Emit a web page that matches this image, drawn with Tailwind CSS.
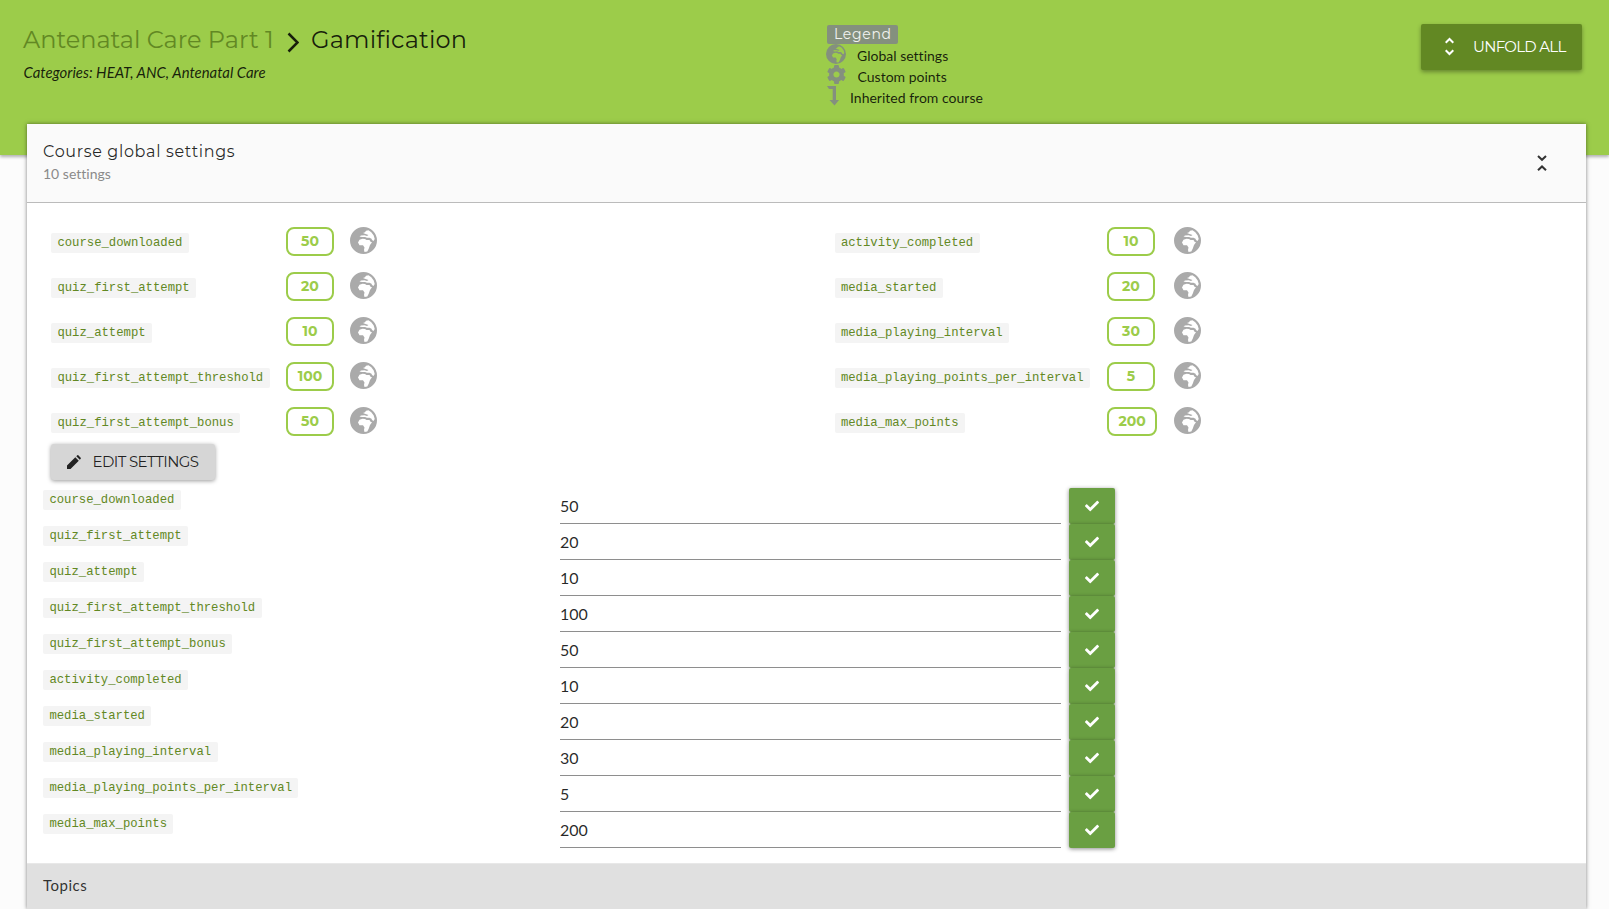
<!DOCTYPE html>
<html lang="en">
<head>
<meta charset="utf-8">
<title>Gamification</title>
<script src="https://cdn.jsdelivr.net/npm/@tailwindcss/browser@4"></script>
</head>
<body class="h-[909px] overflow-hidden bg-[#fcfcfc] font-[Lato,sans-serif] text-sm text-black/85">
<svg class="hidden">
  <symbol id="globe" viewBox="0 0 27 27"><path fill-rule="evenodd" fill="currentColor" d="M13.500 0a13.500 13.500 0 1 0 0 27a13.500 13.500 0 1 0 0-27ZM9.500 9.500L11 8.500L14.500 8.300L17 9L18.500 8L15.500 7L13 6L15 5.200L16 3.700L18.500 3.300L21.300 5.200L23.700 8.500L24.700 12L23.500 14L22 13L21.500 11.700L19.500 10.800L17 10.800L15 9.900L12 10ZM8 15.500L9.500 12.800L12.500 11.700L15 12L16.500 13L19.500 13L20.500 14.800L22 15.300L20 18L18.800 21.500L17.300 24.500L14.500 25L14 23L14.500 20.500L13 18.300L9.500 18.300Z"/></symbol>
  <symbol id="check" viewBox="0 0 512 512"><path fill="currentColor" d="M173.898 439.404l-166.400-166.400c-9.997-9.997-9.997-26.206 0-36.204l36.203-36.204c9.997-9.998 26.207-9.998 36.204 0L192 312.690 432.095 72.596c9.997-9.997 26.207-9.997 36.204 0l36.203 36.204c9.997 9.997 9.997 26.206 0 36.204l-294.400 294.401c-9.998 9.997-26.207 9.997-36.204-.001z"/></symbol>
</svg>
<header class="flex h-[155px] bg-[#9ccc4a] shadow-[0_2px_3px_rgba(0,0,0,0.3)]">
  <div class="w-[804px] pl-[23px] pt-[24px]">
    <h1 class="flex h-8 items-center font-[Montserrat,sans-serif] text-[24px] whitespace-nowrap">
      <a class="w-[264px] text-[#628823]">Antenatal Care Part 1</a>
      <svg class="mt-[5px] mr-[12px] h-[21px] w-[12px]" viewBox="0 0 12 21" fill="none" stroke="currentColor" stroke-width="2.500"><path d="M1.500 1.500L10.500 10.500L1.500 19.500"/></svg>
      <span class="tracking-[0.15px]">Gamification</span>
    </h1>
    <p class="mt-[6px] pl-[0.500px] text-[14.900px] leading-[21px] italic">Categories: HEAT, ANC, Antenatal Care</p>
  </div>
  <div class="w-[617px] pl-[23px] pt-[25px] tracking-[0.01px]">
    <div class="h-[19px] w-[71px] rounded-[2px] bg-[#84907e] pl-[7px] font-[Montserrat,sans-serif] text-[14px] leading-[18px] tracking-[0.7px] text-white/90">Legend</div>
    <div class="flex h-[21px] text-[#84907e]"><svg class="-ml-px mr-[11px] h-[20px] w-[20px]"><use href="#globe"/></svg><span class="pt-[2px] text-black/85">Global settings</span></div>
    <div class="flex h-[21px] text-[#84907e]"><svg class="mr-[11px] h-[19px] w-[19px]" viewBox="8 8 496 496"><path fill="currentColor" d="M487.400 315.700l-42.600-24.600c4.300-23.200 4.300-47 0-70.200l42.600-24.600c4.900-2.800 7.100-8.600 5.500-14-11.100-35.600-30-67.800-54.700-94.600-3.800-4.100-10-5.100-14.800-2.300L380.800 110c-17.900-15.400-38.500-27.300-60.800-35.100V25.800c0-5.600-3.900-10.500-9.400-11.700-36.700-8.200-74.300-7.800-109.200 0-5.500 1.200-9.400 6.100-9.400 11.700V75c-22.200 7.900-42.800 19.800-60.800 35.100L88.700 85.500c-4.900-2.800-11-1.900-14.800 2.300-24.700 26.700-43.600 58.900-54.700 94.600-1.700 5.400.6 11.200 5.500 14L67.300 221c-4.300 23.200-4.300 47 0 70.200l-42.600 24.600c-4.900 2.800-7.100 8.600-5.500 14 11.100 35.600 30 67.800 54.700 94.600 3.800 4.100 10 5.100 14.800 2.300l42.600-24.600c17.900 15.400 38.500 27.300 60.800 35.100v49.200c0 5.600 3.900 10.500 9.400 11.700 36.700 8.200 74.300 7.800 109.200 0 5.500-1.200 9.400-6.100 9.400-11.700v-49.200c22.200-7.900 42.800-19.800 60.800-35.100l42.600 24.600c4.900 2.800 11 1.900 14.800-2.300 24.700-26.700 43.600-58.900 54.700-94.600 1.500-5.500-.7-11.300-5.600-14.100zM256 336c-44.100 0-80-35.900-80-80s35.900-80 80-80 80 35.900 80 80-35.900 80-80 80z"/></svg><span class="pt-[2px] pl-[0.500px] text-black/85">Custom points</span></div>
    <div class="flex h-[21px] text-[#84907e]"><svg class="-mt-px mr-[11px] h-[21px] w-[12px]" viewBox="0 0 12 21"><path fill="currentColor" d="M0 1H9V15H12L7.500 20.500L2.500 15H5.700V4H2Z"/></svg><span class="pt-[2px] text-black/85">Inherited from course</span></div>
  </div>
  <button class="mt-[24px] flex h-[46px] w-[161px] items-center rounded-[2px] bg-[#628823] pb-px pl-[24px] font-[Montserrat,sans-serif] text-[15px] tracking-[-0.7px] text-white shadow-[0_2px_4px_rgba(0,0,0,0.35)]">
    <svg class="mr-[19px] h-[19px] w-[9px]" viewBox="0 0 9 19" fill="none" stroke="currentColor" stroke-width="2"><path d="M.7 5.700L4.500 2L8.300 5.700M.7 13.300L4.500 17L8.300 13.300"/></svg>UNFOLD ALL</button>
</header>

<main class="relative -mt-[31px] mr-[23px] ml-[27px] h-[785px] bg-white shadow-[0_0_4px_rgba(0,0,0,0.5)]">
  <section class="flex h-[79px] justify-between border-b border-[#bbb] bg-[#fafafa] pr-[39px] pl-4">
    <div>
      <h2 class="mt-[16px] font-[Montserrat,sans-serif] text-[16px] leading-6 tracking-[0.65px]">Course global settings</h2>
      <p class="leading-5 text-[#8a8a8a] [font-variant-ligatures:none]">10 settings</p>
    </div>
    <svg class="mt-[30px] h-[19px] w-[10px]" viewBox="0 0 10 19" fill="none" stroke="#333" stroke-width="2"><path d="M1 2L5 5.800L9 2M1 16.300L5 12.500L9 16.300"/></svg>
  </section>
  <section class="h-[660px]">
    <div class="grid grid-cols-[783.500px_1fr] pt-[16px] pl-6">
      <div id="left-points"></div>
      <div id="right-points"></div>
    </div>
    <button class="ml-[23.500px] flex h-[36px] w-[164.500px] items-center rounded-[3px] bg-[#d6d6d6] pl-[16.500px] font-[Montserrat,sans-serif] text-[15px] tracking-[-0.600px] text-black/85 shadow-[0_1px_4px_rgba(0,0,0,0.4)]">
      <svg class="mr-[11.500px] h-[14px] w-[14px]" viewBox="0 0 14 14"><path fill="#222" d="M0 14V10.500L8.300 2.200L11.800 5.700L3.500 14ZM9.300 1.200L10.300.3Q10.800-.1 11.300.3L13.700 2.700Q14.100 3.200 13.700 3.700L12.800 4.700Z"/></svg>EDIT SETTINGS</button>
    <div id="fields" class="mt-[8px] pl-4"></div>
  </section>
  <section class="h-[46px] border-t border-[#e8e8e8] bg-[#e0e0e0] pt-[9px] pl-4 text-[15px] leading-6 tracking-[0.5px] text-black/80">Topics</section>
</main>

<template id="point-row">
  <div class="flex h-[45px]">
    <div data-col><code class="mt-[14px] inline-block h-5 rounded-[2px] bg-[#f4f4f4] px-[6.400px] align-top font-[Liberation_Mono,monospace] text-[12.250px] leading-[20px] text-[#628823]"></code></div>
    <b class="mt-[8px] h-[29px] min-w-[48px] rounded-[8px] border-2 border-[#9ccc4a] px-[9.500px] text-center font-[Montserrat,sans-serif] text-[14px] leading-[25px] font-bold text-[#9ccc4a]"></b>
    <svg class="mt-[8px] ml-auto h-[27px] w-[27px] text-[#aaa]"><use href="#globe"/></svg>
  </div>
</template>
<template id="field-row">
  <div class="flex h-[36px]">
    <div class="w-[517px]"><code class="mt-[2px] inline-block h-5 rounded-[2px] bg-[#f4f4f4] px-[6.400px] align-top font-[Liberation_Mono,monospace] text-[12.250px] leading-[20px] text-[#628823]"></code></div>
    <div data-value class="w-[501px] border-b border-[#8e8e8e] text-[16px] leading-[35px]"></div>
    <button class="ml-[8px] flex h-[36px] w-[46px] items-center justify-center rounded-[2px] bg-[#6a9f42] text-white shadow-[0_1px_4px_rgba(0,0,0,0.45)]"><svg class="h-[14px] w-[14px]"><use href="#check"/></svg></button>
  </div>
</template>
<script>
  const left = [["course_downloaded", 50], ["quiz_first_attempt", 20], ["quiz_attempt", 10], ["quiz_first_attempt_threshold", 100], ["quiz_first_attempt_bonus", 50]];
  const right = [["activity_completed", 10], ["media_started", 20], ["media_playing_interval", 30], ["media_playing_points_per_interval", 5], ["media_max_points", 200]];
  function points(id, rows, col, width) {
    for (const [name, value] of rows) {
      const row = document.getElementById("point-row").content.cloneNode(true);
      row.firstElementChild.style.width = width + "px";
      row.querySelector("[data-col]").style.width = col + "px";
      row.querySelector("code").textContent = name;
      row.querySelector("b").textContent = value;
      document.getElementById(id).append(row);
    }
  }
  points("left-points", left, 235, 326);
  points("right-points", right, 272.5, 366);
  for (const [name, value] of [...left, ...right]) {
    const row = document.getElementById("field-row").content.cloneNode(true);
    row.querySelector("code").textContent = name;
    row.querySelector("[data-value]").textContent = value;
    document.getElementById("fields").append(row);
  }
</script>
</body>
</html>
